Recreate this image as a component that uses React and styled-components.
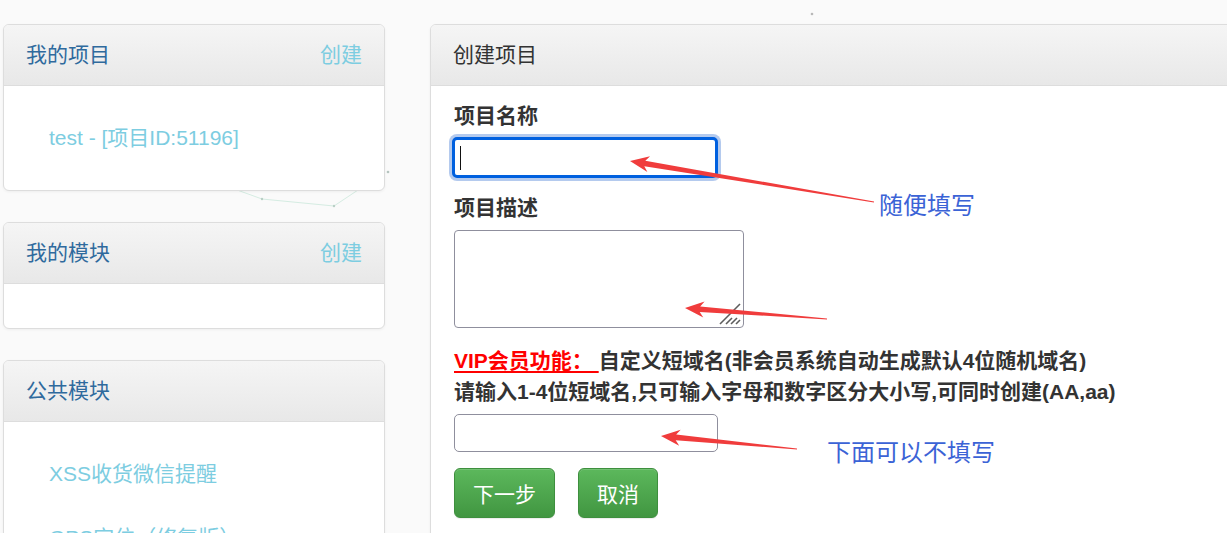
import React from "react";
import styled, { createGlobalStyle } from "styled-components";

const GlobalStyle = createGlobalStyle`
  * { box-sizing: border-box; }
  html, body { margin: 0; padding: 0; overflow: hidden; background: #fafafa; }
  body {
    font-family: "Liberation Sans", "Noto Sans CJK SC", sans-serif;
    color: #333;
  }
`;

const Stage = styled.div`
  position: relative;
  width: 1227px;
  height: 533px;
  overflow: hidden;
`;

const Backdrop = styled.svg`
  position: absolute;
  left: 0;
  top: 0;
  z-index: 0;
`;

const Layout = styled.div`
  position: relative;
  z-index: 1;
  display: flex;
  align-items: flex-start;
  gap: 45px;
  padding: 24px 0 0 3px;
`;

const Sidebar = styled.div`
  width: 382px;
  flex-shrink: 0;
  display: flex;
  flex-direction: column;
  gap: 31px;
`;

const Panel = styled.div`
  background: #fff;
  border: 1px solid #ddd;
  border-radius: 6px;
  box-shadow: 0 1px 3px rgba(0, 0, 0, 0.05);
  overflow: hidden;
  width: ${(p) => p.$width || "auto"};
  flex-shrink: 0;
`;

const PanelHeading = styled.div`
  display: flex;
  justify-content: space-between;
  align-items: center;
  height: 61px;
  padding: 0 22px;
  background: linear-gradient(#f5f5f5, #e8e8e8);
  border-bottom: 1px solid #ddd;
  font-size: 21px;
  line-height: 30px;
  color: ${(p) => p.$tone || "#333"};
`;

const CreateLink = styled.a`
  color: #7dcde1;
  text-decoration: none;
`;

const ListBody = styled.div`
  padding: 20px 0;
  min-height: 44px;
`;

const EmptyBody = styled.div`
  height: 44px;
`;

const ListItem = styled.a`
  display: block;
  padding: 17px 0 17px 45px;
  font-size: 21px;
  line-height: 30px;
  color: #7dcde1;
  text-decoration: none;
  white-space: nowrap;
`;

const FormBody = styled.div`
  padding: 15px 23px 40px;
`;

const Label = styled.label`
  display: block;
  font-size: 21px;
  line-height: 30px;
  font-weight: bold;
  color: #333;
  margin: ${(p) => (p.$first ? "0 0 6px" : "15px 0 7px")};
`;

const InputWrap = styled.div`
  position: relative;
  width: ${(p) => p.$w}px;
  height: ${(p) => p.$h}px;
  margin-left: ${(p) => p.$shift || 0}px;
`;

const TextInput = styled.input`
  display: block;
  width: 100%;
  height: 100%;
  border: ${(p) => (p.$focus ? "3px solid #0060df" : "1px solid #8f8f9d")};
  border-radius: 5px;
  box-shadow: ${(p) => (p.$focus ? "0 0 0 3px #b4caee" : "none")};
  background: #fff;
  outline: none;
  font-size: 21px;
  padding: 0 8px;
`;

const Caret = styled.span`
  position: absolute;
  left: 8px;
  top: 9px;
  width: 1px;
  height: 24px;
  background: #111;
`;

const TextArea = styled.textarea`
  display: block;
  width: 100%;
  height: 100%;
  border: 1px solid #8f8f9d;
  border-radius: 4px;
  resize: none;
  outline: none;
  font-size: 21px;
`;

const Grip = styled.svg`
  position: absolute;
  right: 3px;
  bottom: 3px;
`;

const Notice = styled.div`
  margin: 17px 0 7px;
  font-size: 21px;
  line-height: 31px;
  font-weight: bold;
  color: #333;
  white-space: nowrap;
`;

const VipTag = styled.span`
  color: #ff0000;
  text-decoration: underline;
  text-decoration-thickness: 2px;
  text-underline-offset: 3px;
`;

const ButtonRow = styled.div`
  display: flex;
  gap: 23px;
  margin-top: 16px;
`;

const Button = styled.button`
  height: 50px;
  padding: 0 18px;
  font-family: "Liberation Sans", "Noto Sans CJK SC", sans-serif;
  font-size: 21px;
  color: #fff;
  background: linear-gradient(#5cb85c, #419641);
  border: 1px solid #3e8f3e;
  border-radius: 6px;
  box-shadow: inset 0 1px 0 rgba(255, 255, 255, 0.15), 0 1px 1px rgba(0, 0, 0, 0.075);
`;

const Overlay = styled.svg`
  position: absolute;
  left: 0;
  top: 0;
  z-index: 2;
  pointer-events: none;
`;

const Note = styled.span`
  position: absolute;
  z-index: 2;
  left: ${(p) => p.$x}px;
  top: ${(p) => p.$y}px;
  font-size: 24px;
  line-height: 28px;
  color: #3b63d6;
  white-space: nowrap;
`;

const arrows = [
  { tip: [630, 161], tail: [874, 202] },
  { tip: [685, 308], tail: [827, 319] },
  { tip: [661, 436], tail: [797, 449] },
];

const arrowPoints = ({ tip, tail }) => {
  const [tx, ty] = tip;
  const len = Math.hypot(tail[0] - tx, tail[1] - ty);
  const dx = (tail[0] - tx) / len;
  const dy = (tail[1] - ty) / len;
  const nx = -dy;
  const ny = dx;
  const pt = (a, b) =>
    `${(tx + dx * a + nx * b).toFixed(1)},${(ty + dy * a + ny * b).toFixed(1)}`;
  return [
    pt(0, 0),
    pt(19, 8),
    pt(15, 2.8),
    pt(len, 0.4),
    pt(len, -0.4),
    pt(15, -2.8),
    pt(19, -8),
  ].join(" ");
};

const App = () => {
  return (
    <Stage>
      <GlobalStyle />
      <Backdrop width="1227" height="533">
        <polyline
          points="226,186 262,199 334,206 358,190"
          fill="none"
          stroke="#d5ece2"
          strokeWidth="1"
        />
        <circle cx="262" cy="199" r="1.2" fill="#b9cfc5" />
        <circle cx="334" cy="206" r="1.2" fill="#b9cfc5" />
        <circle cx="388" cy="172" r="1.3" fill="#b5c4bf" />
        <circle cx="812" cy="14" r="1.3" fill="#b8b8b8" />
      </Backdrop>

      <Layout>
        <Sidebar>
          <Panel>
            <PanelHeading $tone="#2f6a9d">
              <span>我的项目</span>
              <CreateLink>创建</CreateLink>
            </PanelHeading>
            <ListBody>
              <ListItem>test - [项目ID:51196]</ListItem>
            </ListBody>
          </Panel>

          <Panel>
            <PanelHeading $tone="#2f6a9d">
              <span>我的模块</span>
              <CreateLink>创建</CreateLink>
            </PanelHeading>
            <EmptyBody />
          </Panel>

          <Panel>
            <PanelHeading $tone="#2f6a9d">
              <span>公共模块</span>
            </PanelHeading>
            <ListBody>
              <ListItem>XSS收货微信提醒</ListItem>
              <ListItem>GPS定位（修复版）</ListItem>
            </ListBody>
          </Panel>
        </Sidebar>

        <Panel $width="860px">
          <PanelHeading>
            <span>创建项目</span>
          </PanelHeading>
          <FormBody>
            <Label $first>项目名称</Label>
            <InputWrap $w={266} $h={41} $shift={-2}>
              <TextInput $focus />
              <Caret />
            </InputWrap>

            <Label>项目描述</Label>
            <InputWrap $w={290} $h={98}>
              <TextArea />
              <Grip width="22" height="22" viewBox="0 0 22 22">
                <g stroke="#5d5d5d" strokeWidth="1.6">
                  <line x1="1" y1="21" x2="21" y2="1" />
                  <line x1="7" y1="21" x2="13" y2="15" />
                  <line x1="12" y1="21" x2="18" y2="15" />
                  <line x1="17" y1="21" x2="21" y2="17" />
                </g>
              </Grip>
            </InputWrap>

            <Notice>
              <VipTag>VIP会员功能： </VipTag>
              自定义短域名(非会员系统自动生成默认4位随机域名)
              <br />
              请输入1-4位短域名,只可输入字母和数字区分大小写,可同时创建(AA,aa)
            </Notice>
            <InputWrap $w={264} $h={38}>
              <TextInput />
            </InputWrap>

            <ButtonRow>
              <Button>下一步</Button>
              <Button>取消</Button>
            </ButtonRow>
          </FormBody>
        </Panel>
      </Layout>

      <Overlay width="1227" height="533">
        {arrows.map((a, i) => (
          <polygon key={i} points={arrowPoints(a)} fill="#f03c3c" />
        ))}
      </Overlay>
      <Note $x={879} $y={192}>随便填写</Note>
      <Note $x={827} $y={439}>下面可以不填写</Note>
    </Stage>
  );
};

export default App;
